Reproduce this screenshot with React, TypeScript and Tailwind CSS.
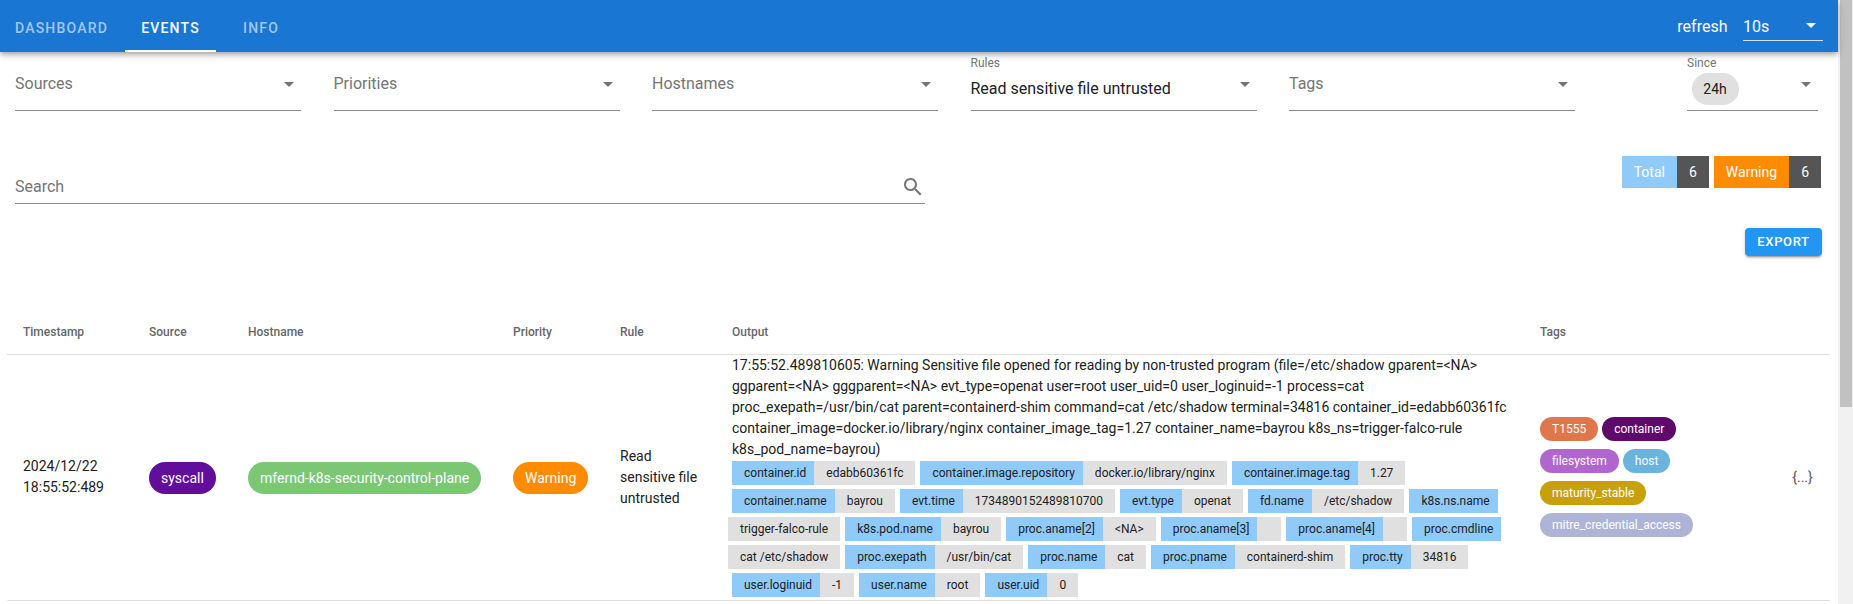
const FONT = "font-['Roboto',sans-serif]";

const FILTERS = ["Sources", "Priorities", "Hostnames", "Rules", "Tags"];

const FIELDS: [string, string][] = [
  ["container.id", "edabb60361fc"],
  ["container.image.repository", "docker.io/library/nginx"],
  ["container.image.tag", "1.27"],
  ["container.name", "bayrou"],
  ["evt.time", "1734890152489810700"],
  ["evt.type", "openat"],
  ["fd.name", "/etc/shadow"],
  ["k8s.ns.name", "trigger-falco-rule"],
  ["k8s.pod.name", "bayrou"],
  ["proc.aname[2]", "<NA>"],
  ["proc.aname[3]", ""],
  ["proc.aname[4]", ""],
  ["proc.cmdline", "cat /etc/shadow"],
  ["proc.exepath", "/usr/bin/cat"],
  ["proc.name", "cat"],
  ["proc.pname", "containerd-shim"],
  ["proc.tty", "34816"],
  ["user.loginuid", "-1"],
  ["user.name", "root"],
  ["user.uid", "0"],
];

const TAGS = [
  { label: "T1555", color: "bg-[#e0774c]" },
  { label: "container", color: "bg-[#5f0a6b]" },
  { label: "filesystem", color: "bg-[#b066cc]" },
  { label: "host", color: "bg-[#69b3dd]" },
  { label: "maturity_stable", color: "bg-[#c8a00a]" },
  { label: "mitre_credential_access", color: "bg-[#aeb4d8]" },
];

function Caret() {
  return (
    <svg viewBox="0 0 24 24" className="absolute top-[9px] right-0 h-6 w-6 fill-[#757575]">
      <path d="M7 10l5 5 5-5z" />
    </svg>
  );
}

function Filter({ label }: { label: string }) {
  const selected = label === "Rules";
  return (
    <div className="relative w-[286px] shrink-0">
      {selected && (
        <div className="absolute top-[-7px] left-0 text-[12px] leading-[14px] text-[#757575]">
          Rules
        </div>
      )}
      <div className="relative flex h-[48px] items-center border-b border-[#8c8c8c] pb-[6px] text-[16px]">
        {selected ? (
          <span className="mt-[10px] text-[#212121]">Read sensitive file untrusted</span>
        ) : (
          <span className="text-[#757575]">{label}</span>
        )}
        <Caret />
      </div>
    </div>
  );
}

function Count({ label, color }: { label: string; color: string }) {
  return (
    <div className="flex h-8 items-center text-[14px] text-white">
      <span className={`flex h-full items-center px-3 ${color}`}>{label}</span>
      <span className="flex h-full items-center bg-[#555555] px-3">6</span>
    </div>
  );
}

function Pill({ label, color }: { label: string; color: string }) {
  return (
    <span className={`inline-flex h-8 items-center rounded-2xl px-3 text-[14px] whitespace-nowrap text-white ${color}`}>
      {label}
    </span>
  );
}

export default function App() {
  return (
    <div className={`flex h-screen overflow-hidden bg-white ${FONT}`}>
      <div className="min-w-0 flex-1">
        <header className="relative z-10 flex h-[52px] items-start justify-between bg-[#1976d2] text-white shadow-[0_2px_4px_-1px_rgba(0,0,0,0.2),0_4px_5px_0_rgba(0,0,0,0.14),0_1px_10px_0_rgba(0,0,0,0.12)]">
          <nav className="flex h-[52px] text-[14px] font-medium tracking-[0.085em] uppercase">
            <a className="flex w-[125px] items-center pt-[4px] pl-[15px] text-white/60">Dashboard</a>
            <a className="flex w-[91px] items-center justify-center border-b-2 border-white pt-[6px]">Events</a>
            <a className="flex w-[90px] items-center justify-center pt-[4px] text-white/60">Info</a>
          </nav>
          <div className="mr-[15px] flex h-[41px] items-start text-[16px]">
            <span className="mt-[16px] mr-[15.5px] leading-[21px]">refresh</span>
            <div className="relative h-[41px] w-[80px] border-b border-white/80 pt-[16px] leading-[21px]">
              10s
              <svg viewBox="0 0 24 24" className="absolute top-[13px] right-0 h-6 w-6 fill-white">
                <path d="M7 10l5 5 5-5z" />
              </svg>
            </div>
          </div>
        </header>

        <section className="flex pt-[11px] pl-[15px]">
          <div className="flex gap-[32.5px]">
            {FILTERS.map((f) => (
              <Filter key={f} label={f} />
            ))}
          </div>
          <div className="relative ml-[112px] w-[131px]">
            <div className="absolute top-[-7px] left-0 text-[12px] leading-[14px] text-[#757575]">Since</div>
            <div className="relative flex h-[48px] items-start border-b border-[#8c8c8c] pt-[10px] pl-[4.5px]">
              <span className="flex h-8 w-[47px] items-center justify-center rounded-2xl bg-[#e0e0e0] text-[14px] text-[#212121]">
                24h
              </span>
              <Caret />
            </div>
          </div>
        </section>

        <section className="flex items-start justify-between pr-[16px] pl-[15px]">
          <div className="relative mt-[27px] flex h-[66px] w-[910px] items-end border-b border-[#8c8c8c] pb-[4px] text-[16px] text-[#757575]">
            Search
            <svg viewBox="0 0 24 24" className="absolute right-0 bottom-[4px] h-6 w-6 fill-[#757575]">
              <path d="M15.5 14h-.79l-.28-.27C15.41 12.59 16 11.11 16 9.5 16 5.91 13.09 3 9.5 3S3 5.91 3 9.5 5.91 16 9.5 16c1.61 0 3.09-.59 4.23-1.57l.27.28v.79l5 4.99L20.49 19l-4.99-5zm-6 0C7.01 14 5 11.99 5 9.5S7.01 5 9.5 5 14 7.01 14 9.5 11.99 14 9.5 14z" />
            </svg>
          </div>
          <div className="mt-[45px] flex flex-col items-end">
            <div className="mr-[1px] flex gap-[5px]">
              <Count label="Total" color="bg-[#90caf9]" />
              <Count label="Warning" color="bg-[#ff8c00]" />
            </div>
            <button className="mt-10 h-7 w-[77px] rounded bg-[#2196f3] text-[13px] font-medium tracking-[0.05em] text-white uppercase shadow-[0_3px_1px_-2px_rgba(0,0,0,0.2),0_2px_2px_0_rgba(0,0,0,0.14),0_1px_5px_0_rgba(0,0,0,0.12)]">
              Export
            </button>
          </div>
        </section>

        <div className="mt-[54px] mr-[8px] ml-[7px]">
          <table className="w-full table-fixed border-collapse text-[14px] text-[#212121]">
            <colgroup>
              <col className="w-[126px]" />
              <col className="w-[99px]" />
              <col className="w-[265px]" />
              <col className="w-[107px]" />
              <col className="w-[112px]" />
              <col className="w-[808px]" />
              <col className="w-[247px]" />
              <col />
            </colgroup>
            <thead>
              <tr className="h-[44px] border-b border-[#e0e0e0] text-left text-[12px] font-medium text-[#666666]">
                {["Timestamp", "Source", "Hostname", "Priority", "Rule", "Output", "Tags", ""].map((h) => (
                  <th key={h} className="pl-4 font-medium">
                    {h}
                  </th>
                ))}
              </tr>
            </thead>
            <tbody>
              <tr className="h-[246px] border-b border-[#e0e0e0] align-middle leading-[21px]">
                <td className="pr-2 pl-4">
                  2024/12/22
                  <br />
                  18:55:52:489
                </td>
                <td className="pt-[2px] pl-4">
                  <Pill label="syscall" color="bg-[#610e9b]" />
                </td>
                <td className="pt-[2px] pl-4">
                  <Pill label="mfernd-k8s-security-control-plane" color="bg-[#7bc774]" />
                </td>
                <td className="pt-[2px] pl-4">
                  <Pill label="Warning" color="bg-[#ff8c00]" />
                </td>
                <td className="pr-4 pl-4">Read sensitive file untrusted</td>
                <td className="pr-4 pl-4 align-top">
                  <p>
                    17:55:52.489810605: Warning Sensitive file opened for reading by non-trusted program (file=/etc/shadow
                    gparent=&lt;NA&gt; ggparent=&lt;NA&gt; gggparent=&lt;NA&gt; evt_type=openat user=root user_uid=0
                    user_loginuid=-1 process=cat proc_exepath=/usr/bin/cat parent=containerd-shim command=cat /etc/shadow
                    terminal=34816 container_id=edabb60361fc container_image=docker.io/library/nginx
                    container_image_tag=1.27 container_name=bayrou k8s_ns=trigger-falco-rule k8s_pod_name=bayrou)
                  </p>
                  <div className="mt-[1px] ml-[-4px] flex flex-wrap gap-y-1 text-[12px] leading-6">
                    {FIELDS.map(([k, v]) => (
                      <span key={k} className="contents">
                        <span className="ml-1 h-6 bg-[#90caf9] pr-2 pl-3">{k}</span>
                        <span className="mr-[1px] h-6 bg-[#e0e0e0] px-3">{v}</span>
                      </span>
                    ))}
                  </div>
                </td>
                <td className="pr-4 pl-4">
                  <div className="flex flex-wrap gap-x-1 gap-y-2">
                    {TAGS.map((t) => (
                      <span
                        key={t.label}
                        className={`h-6 rounded-xl px-3 text-[12px] leading-6 text-white ${t.color}`}
                      >
                        {t.label}
                      </span>
                    ))}
                  </div>
                </td>
                <td className="pl-1 text-center text-[14px] text-[#555555]">{"{...}"}</td>
              </tr>
            </tbody>
          </table>
        </div>
      </div>
      <aside className="h-screen w-[15px] shrink-0 bg-[#f1f1f1] pr-[1px] pl-[2px]">
        <div className="h-[407px] bg-[#c1c1c1]" />
      </aside>
    </div>
  );
}
